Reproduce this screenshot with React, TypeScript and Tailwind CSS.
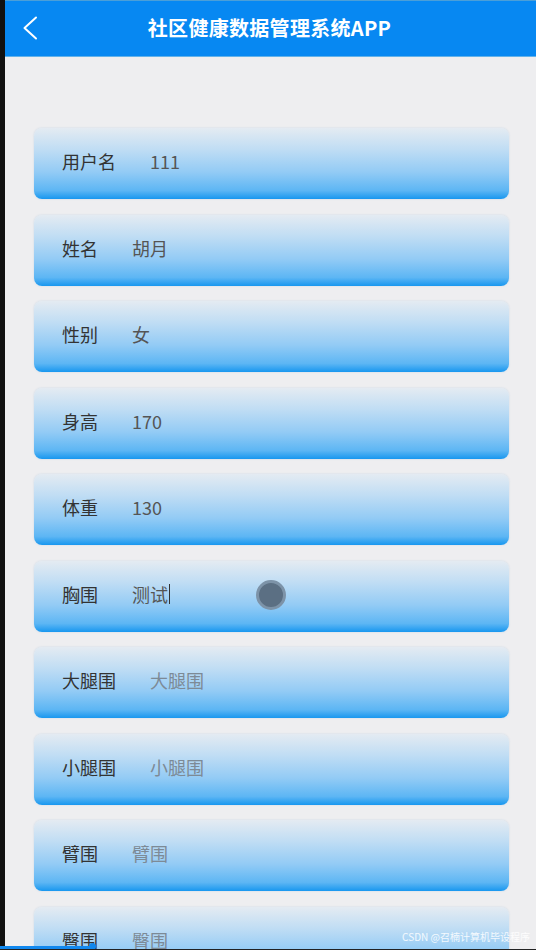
const FIELDS: { label: string; value: string; placeholder?: boolean; caret?: boolean }[] = [
  { label: "用户名", value: "111" },
  { label: "姓名", value: "胡月" },
  { label: "性别", value: "女" },
  { label: "身高", value: "170" },
  { label: "体重", value: "130" },
  { label: "胸围", value: "测试", caret: true },
  { label: "大腿围", value: "大腿围", placeholder: true },
  { label: "小腿围", value: "小腿围", placeholder: true },
  { label: "臂围", value: "臂围", placeholder: true },
  { label: "臀围", value: "臀围", placeholder: true },
];

const FONT = "font-['Microsoft_YaHei','Noto_Sans_CJK_SC',sans-serif]";

export default function App() {
  return (
    <div className={`relative flex h-[950px] w-[536px] overflow-hidden bg-black ${FONT}`}>
      <div className="w-[5px] shrink-0 bg-[#111]" />
      <div className="flex min-w-0 flex-1 flex-col bg-[#eeeef0]">
        <header className="relative flex h-[57px] shrink-0 items-center justify-center border-t border-b border-t-[#4b9fd8] border-b-[#62b2ea] bg-[#0788f2]">
          <svg className="absolute left-[16px] top-[14px]" width="18" height="26" viewBox="0 0 18 26" fill="none">
            <path d="M15 2.5 L3.5 13 L15 23.5" stroke="white" strokeWidth="2" strokeLinecap="round" strokeLinejoin="round" />
          </svg>
          <h1 className="ml-[-2px] pb-[2px] text-[20px] font-bold tracking-[0.3px] text-white">社区健康数据管理系统APP</h1>
        </header>

        <div className="flex flex-col gap-[15.5px] pl-[29px] pr-[27px] pt-[71px]">
          {FIELDS.map((f) => (
            <div
              key={f.label}
              className="flex h-[71px] shrink-0 items-center rounded-[8px] bg-[linear-gradient(to_bottom,#e4ebf2_0%,#c0ddf4_30%,#93cbf5_62%,#5db6f4_88%,#1897ef_100%)] pb-[4px] pl-[28px] shadow-[0_0_2px_rgba(120,170,210,0.35)]"
            >
              <span className="mr-[34px] text-[18px] text-[#333]">{f.label}</span>
              <span className={`text-[18px] ${f.placeholder ? "text-[#7d8a96]" : "text-[#555]"}`}>{f.value}</span>
              {f.caret && <span className="ml-[1px] h-[20px] w-[1px] bg-[#333]" />}
              {f.caret && (
                <span className="ml-[86px] mt-[2px] size-[30px] rounded-full border-[3px] border-[#7d93a8] bg-[#5b6f83]" />
              )}
            </div>
          ))}
        </div>
      </div>

      <span className="absolute bottom-[6px] right-[6px] text-[10px] text-white/85">CSDN @召楠计算机毕设程序</span>
      <div className="absolute bottom-[1px] left-0 h-[3px] w-[94px] bg-[#1188ee]" />
      <div className="absolute bottom-0 left-[89px] size-[7px] rounded-full bg-[#1188ee]" />
      <div className="absolute bottom-0 left-0 h-[1px] w-full bg-[#222]" />
    </div>
  );
}
